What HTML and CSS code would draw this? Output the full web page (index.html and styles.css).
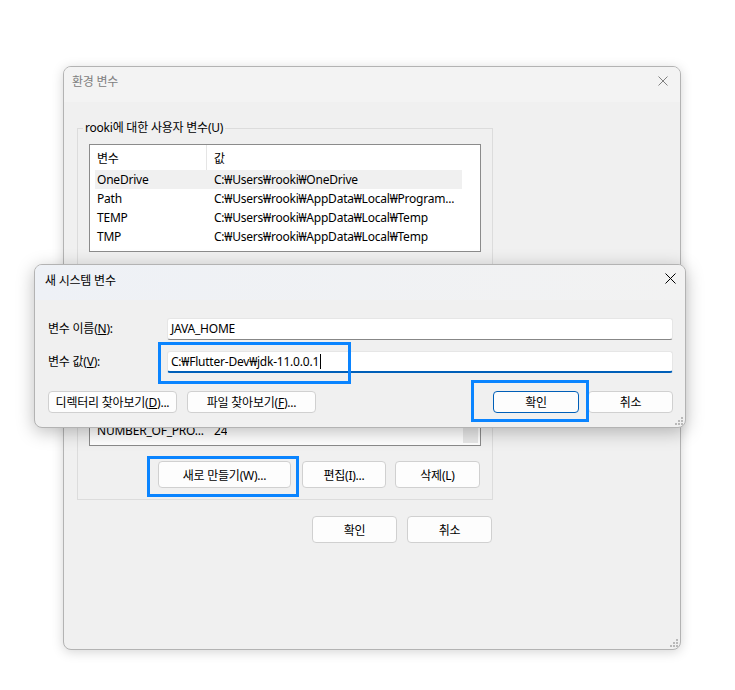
FILE: index.html
```html
<!DOCTYPE html>
<html lang="ko">
<head>
<meta charset="utf-8">
<title>환경 변수</title>
<link rel="stylesheet" href="styles.css">
</head>
<body>
<div class="desk">

  <section class="win win-env">
    <header class="titlebar">
      <span class="title">환경 변수</span>
      <svg class="xicon" width="10" height="10" viewBox="0 0 10 10"><path d="M0.5 0.5L9.5 9.5M9.5 0.5L0.5 9.5" stroke="currentColor" stroke-width="1" fill="none"/></svg>
    </header>
    <div class="win-body">
      <fieldset class="group">
        <legend>rooki에 대한 사용자 변수(U)</legend>
        <div class="list">
          <div class="list-main">
            <div class="list-head"><span class="c1">변수</span><span class="c2">값</span></div>
            <div class="row sel"><span class="c1">OneDrive</span><span class="c2">C:₩Users₩rooki₩OneDrive</span></div>
            <div class="row"><span class="c1">Path</span><span class="c2">C:₩Users₩rooki₩AppData₩Local₩Program...</span></div>
            <div class="row"><span class="c1">TEMP</span><span class="c2">C:₩Users₩rooki₩AppData₩Local₩Temp</span></div>
            <div class="row"><span class="c1">TMP</span><span class="c2">C:₩Users₩rooki₩AppData₩Local₩Temp</span></div>
          </div>
          <div class="scroll"></div>
        </div>
        <div class="btns">
          <button class="btn b-new">새로 만들기(N)...</button>
          <button class="btn b-edit">편집(E)...</button>
          <button class="btn b-del">삭제(D)</button>
        </div>
      </fieldset>

      <fieldset class="group sys">
        <legend>시스템 변수(S)</legend>
        <div class="list">
          <div class="list-main">
            <div class="list-head"><span class="c1">변수</span><span class="c2">값</span></div>
            <div class="row"><span class="c1">ComSpec</span><span class="c2">C:₩WINDOWS₩system32₩cmd.exe</span></div>
            <div class="row"><span class="c1">DriverData</span><span class="c2">C:₩Windows₩System32₩Drivers</span></div>
            <div class="row"><span class="c1">FPS_BROWSE...</span><span class="c2">4</span></div>
            <div class="row"><span class="c1">NUMBER_OF_PRO...</span><span class="c2">24</span></div>
          </div>
          <div class="scroll"><span class="thumb"></span></div>
        </div>
        <div class="btns">
          <button class="btn b-new">새로 만들기(W)...</button>
          <button class="btn b-edit">편집(I)...</button>
          <button class="btn b-del">삭제(L)</button>
        </div>
      </fieldset>

      <div class="dlg-btns">
        <button class="btn b-dlg">확인</button>
        <button class="btn b-dlg">취소</button>
      </div>
    </div>
    <svg class="grip" width="8" height="8" viewBox="0 0 8 8"><path d="M6 0h2v2h-2zM3 3h2v2h-2zM6 3h2v2h-2zM0 6h2v2h-2zM3 6h2v2h-2zM6 6h2v2h-2z" fill="#b9b9b9"/></svg>
  </section>

  <section class="win win-new">
    <header class="titlebar">
      <span class="title">새 시스템 변수</span>
      <svg class="xicon" width="11" height="11" viewBox="0 0 11 11"><path d="M0.5 0.5L10.5 10.5M10.5 0.5L0.5 10.5" stroke="currentColor" stroke-width="1" fill="none"/></svg>
    </header>
    <div class="win-body">
      <div class="form">
        <label class="lbl">변수 이름(<u>N</u>):</label>
        <div class="input">JAVA_HOME</div>
        <label class="lbl">변수 값(<u>V</u>):</label>
        <div class="input focus">C:₩Flutter-Dev₩jdk-11.0.0.1<span class="caret"></span></div>
      </div>
      <div class="new-btns">
        <button class="btn s-browse">디렉터리 찾아보기(<u>D</u>)...</button>
        <button class="btn s-browse">파일 찾아보기(<u>F</u>)...</button>
        <span class="spacer"></span>
        <button class="btn s-ok default">확인</button>
        <button class="btn s-ok">취소</button>
      </div>
    </div>
    <svg class="grip" width="8" height="8" viewBox="0 0 8 8"><path d="M6 0h2v2h-2zM3 3h2v2h-2zM6 3h2v2h-2zM0 6h2v2h-2zM3 6h2v2h-2zM6 6h2v2h-2z" fill="#b9b9b9"/></svg>
  </section>

  <div class="mark m-value"></div>
  <div class="mark m-ok"></div>
  <div class="mark m-new"></div>
</div>
</body>
</html>
```

FILE: styles.css
```css
html, body {
  margin: 0;
  padding: 0;
}
body {
  width: 735px;
  height: 690px;
  background: #ffffff;
  font-family: "Noto Sans", "Noto Sans CJK KR", sans-serif;
  font-size: 12px;
  letter-spacing: -0.22px;
  color: #000;
  overflow: hidden;
}
.desk {
  position: relative;
  width: 735px;
  height: 690px;
}

/* windows */
.win {
  position: absolute;
  box-sizing: border-box;
  border: 1px solid #b3b3b3;
  border-radius: 8px;
  background: #f0f0f0;
  display: flex;
  flex-direction: column;
  overflow: hidden;
}
.win-env {
  left: 63px;
  top: 66px;
  width: 618px;
  height: 584px;
  box-shadow: 0 2px 12px rgba(0, 0, 0, 0.17);
}
.win-new {
  left: 34px;
  top: 264px;
  width: 652px;
  height: 164px;
  box-shadow: 0 4px 18px rgba(0, 0, 0, 0.26);
}
.titlebar {
  flex: none;
  height: 35px;
  box-sizing: border-box;
  display: flex;
  align-items: flex-start;
  justify-content: space-between;
  background: #f3f3f3;
}
.win-env .titlebar {
  padding: 7px 12px 0 8px;
  color: #808080;
}
.win-env .xicon {
  margin-top: 2px;
}
.win-new .titlebar {
  padding: 8px 9px 0 10px;
  background: linear-gradient(90deg, #eef1f6, #f2f2f2);
  color: #000;
}
.win-new .xicon {
  margin-top: 0;
}
.title {
  line-height: 16px;
}
.xicon {
  display: block;
}
.grip {
  position: absolute;
  right: 2px;
  bottom: 2px;
}

/* environment dialog body */
.win-env .win-body {
  padding: 18px 0 0 13px;
  display: flex;
  flex-direction: column;
  align-items: flex-start;
}
.group {
  width: 416px;
  box-sizing: border-box;
  margin: 0;
  padding: 8px 11px 11px 11px;
  border: 1px solid #dcdcdc;
  min-inline-size: 0;
}
.group legend {
  padding: 0 2px;
  margin-left: -6px;
  line-height: 16px;
}
.group.sys {
  margin-top: 8px;
}
.list {
  height: 108px;
  box-sizing: border-box;
  border: 1px solid #8b8b8b;
  background: #fff;
  display: flex;
  overflow: hidden;
}
.list-main {
  width: 367px;
  margin-left: 5px;
  flex: none;
}
.list-head {
  height: 25px;
  display: flex;
  align-items: center;
}
.list-head .c1 {
  align-self: stretch;
  display: flex;
  align-items: center;
  border-right: 1px solid #e5e5e5;
  box-sizing: border-box;
}
.row {
  height: 19px;
  display: flex;
  align-items: center;
}
.row.sel {
  background: #f0f0f0;
}
.c1 {
  width: 112px;
  flex: none;
  padding-left: 2px;
  box-sizing: border-box;
  white-space: nowrap;
  overflow: hidden;
}
.c2 {
  padding-left: 7px;
  white-space: nowrap;
  overflow: hidden;
}
.scroll {
  flex: 1;
  display: flex;
  flex-direction: column;
  justify-content: flex-end;
  padding: 0 2px 2px 1px;
}
.thumb {
  display: block;
  height: 40px;
  background: #e8e8e8;
}

.btns {
  margin-top: 15px;
  display: flex;
  justify-content: flex-end;
  padding-right: 1px;
}
.btn {
  box-sizing: border-box;
  font: inherit;
  letter-spacing: inherit;
  color: #000;
  background: #fdfdfd;
  border: 1px solid #d0d0d0;
  border-radius: 4px;
  padding: 0;
  margin: 0;
  text-align: center;
}
.btns .btn {
  height: 27px;
}
.b-new { width: 133px; }
.b-edit { width: 84px; margin-left: 11px; }
.b-del { width: 85px; margin-left: 9px; }

.dlg-btns {
  margin-top: 16px;
  width: 416px;
  display: flex;
  justify-content: flex-end;
  gap: 10px;
  padding-right: 1px;
  box-sizing: border-box;
}
.b-dlg {
  width: 85px;
  height: 27px;
}

/* new variable dialog */
.win-new .win-body {
  padding: 18px 12px 0 13px;
}
.form {
  display: grid;
  grid-template-columns: 119px 1fr;
  row-gap: 11px;
  align-items: center;
}
.lbl {
  line-height: 22px;
}
.input {
  height: 22px;
  box-sizing: border-box;
  background: #fff;
  border: 1px solid #e6e6e6;
  border-bottom-color: #878787;
  border-radius: 3px;
  padding: 0 0 0 3px;
  line-height: 20px;
  display: flex;
  align-items: center;
}
.input.focus {
  border-bottom: 2px solid #005fb8;
}
.caret {
  display: inline-block;
  width: 1px;
  height: 15px;
  background: #000;
  margin-left: 1px;
}
.new-btns {
  margin-top: 18px;
  display: flex;
  align-items: center;
}
.new-btns .btn {
  height: 22px;
}
.s-browse {
  width: 129px;
  margin-right: 10px;
}
.spacer {
  flex: 1;
}
.s-ok {
  width: 86px;
}
.s-ok + .s-ok {
  margin-left: 9px;
  width: 85px;
}
.btn.default {
  border-color: #005fb8;
}

/* annotation highlight boxes */
.mark {
  position: absolute;
  box-sizing: border-box;
  border: 3px solid #0a84ff;
}
.m-value {
  left: 158px;
  top: 342px;
  width: 193px;
  height: 42px;
}
.m-ok {
  left: 471px;
  top: 380px;
  width: 118px;
  height: 42px;
}
.m-new {
  left: 147px;
  top: 456px;
  width: 152px;
  height: 41px;
}
```
